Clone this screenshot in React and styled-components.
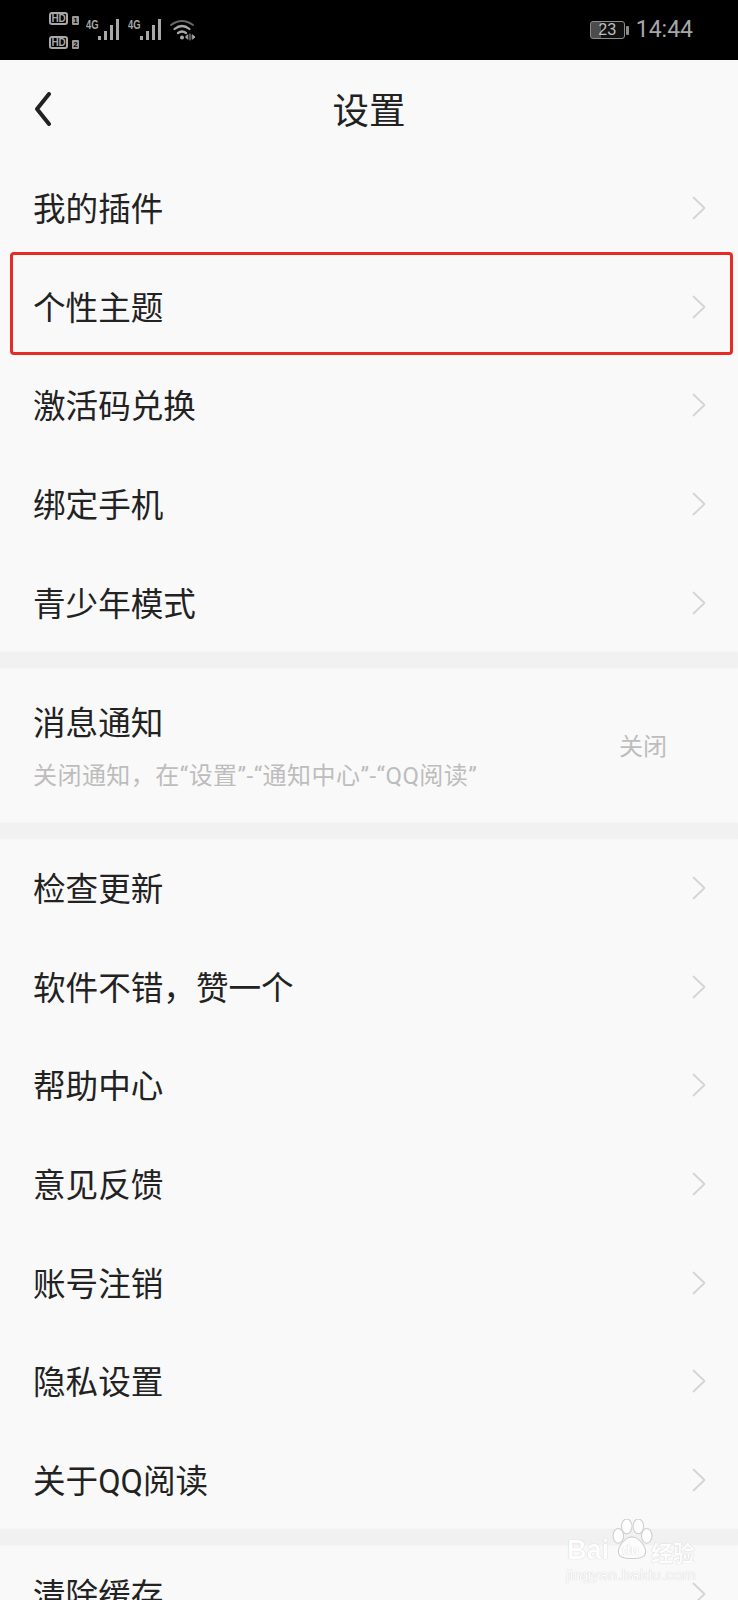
import React from "react";
import styled, { createGlobalStyle } from "styled-components";

const GlobalStyle = createGlobalStyle`
  html, body {
    margin: 0;
    padding: 0;
    background: #f9f9f9;
  }
  body {
    font-family: Roboto, "Noto Sans CJK SC", "Noto Sans", sans-serif;
  }
`;

const Page = styled.div`
  position: relative;
  width: 738px;
  height: 1600px;
  overflow: hidden;
  background: #f9f9f9;
`;

// Status bar
const StatusBar = styled.div`
  height: 60px;
  box-sizing: border-box;
  padding: 0 45px 0 49px;
  background: #000;
  color: #a8a8a8;
  display: flex;
  align-items: center;
  justify-content: space-between;
`;

const StatusGroup = styled.div`
  display: flex;
  align-items: center;
`;

const SimStack = styled.div`
  display: flex;
  flex-direction: column;
  gap: 11px;
  margin: 1px 7px 0 0;
`;

const SimRow = styled.div`
  display: flex;
  align-items: flex-end;
  gap: 4px;
`;

const HdBadge = styled.span`
  width: 19px;
  height: 13px;
  box-sizing: border-box;
  border: 2px solid #a8a8a8;
  border-radius: 3px;
  font: 700 10px/9px "Liberation Sans", sans-serif;
  letter-spacing: -0.3px;
  text-align: center;
`;

const SimNo = styled.span`
  width: 7px;
  height: 9px;
  background: #9a9a9a;
  color: #000;
  border-radius: 1px;
  font: 700 8px/9px "Liberation Sans", sans-serif;
  text-align: center;
`;

const Network = styled.div`
  display: flex;
  align-items: flex-end;
  height: 21px;
  margin-right: 8px;
  margin-top: -1px;
`;

const NetLabel = styled.span`
  align-self: flex-start;
  width: 12px;
  font: 700 13px/11px "Liberation Sans", sans-serif;
  transform: scaleX(0.72);
  transform-origin: left top;
`;

const Battery = styled.div`
  position: relative;
  width: 35px;
  height: 18px;
  box-sizing: border-box;
  border: 1px solid #8c8c8c;
  border-radius: 3px;
  margin-right: 11px;
  background: linear-gradient(to right, #4c4c4c 30%, #111 30%);
  color: #bdbdbd;
  font: 400 16px/16px "Liberation Sans", sans-serif;
  text-align: center;

  &::after {
    content: "";
    position: absolute;
    right: -5px;
    top: 4px;
    width: 3px;
    height: 9px;
    background: #8c8c8c;
    border-radius: 1px;
  }
`;

const Clock = styled.span`
  font: 400 23px/28px Roboto, sans-serif;
  color: #a8a8a8;
`;

// Header
const Header = styled.header`
  position: relative;
  height: 99px;
  display: flex;
  align-items: center;
  justify-content: center;
`;

const BackButton = styled.button`
  position: absolute;
  left: 34px;
  top: 32px;
  padding: 0;
  border: 0;
  background: none;
  line-height: 0;
`;

const Title = styled.h1`
  margin: 5px 0 0;
  font-size: 36.5px;
  font-weight: 400;
  line-height: 48px;
  color: #222;
`;

// List rows
const Section = styled.section`
  display: flex;
  flex-direction: column;
`;

const Row = styled.div`
  height: 98.6px;
  padding: 0 32px 0 33px;
  display: flex;
  align-items: center;
  justify-content: space-between;
`;

const RowLabel = styled.span`
  margin-top: ${({ $flush }) => ($flush ? 0 : 4)}px;
  font-size: 32.6px;
  line-height: 44px;
  color: #222;
`;

const Divider = styled.div`
  height: 16px;
  background: #f1f1f1;
  box-shadow: 0 0 3px #f1f1f1;
`;

const NoticeRow = styled.div`
  height: 155px;
  box-sizing: border-box;
  padding: 34px 71px 0 33px;
  display: flex;
  justify-content: space-between;
`;

const NoticeText = styled.div`
  display: flex;
  flex-direction: column;
  gap: 13px;
`;

const NoticeHint = styled.span`
  font-size: 24px;
  line-height: 34px;
  color: #bdbdbd;
  letter-spacing: 0.45px;
  white-space: nowrap;
`;

const NoticeValue = styled.span`
  margin-top: 28px;
  font-size: 24px;
  line-height: 34px;
  color: #bdbdbd;
`;

// Annotation and watermark, both sit over the screenshot
const Highlight = styled.div`
  position: absolute;
  left: 10px;
  top: 252px;
  width: 723px;
  height: 103px;
  box-sizing: border-box;
  border: 3px solid #e62a25;
  border-radius: 4px;
`;

const Watermark = styled.div`
  position: absolute;
  left: 566px;
  top: 1519px;
  width: 134px;
  height: 66px;
  color: #fdfdfd;
  text-shadow: 0 0 1px #bcbcbc;
`;

const Paw = styled.svg`
  position: absolute;
  left: 44px;
  top: 0;
`;

const WmBrand = styled.span`
  position: absolute;
  top: 18px;
  left: 1px;
  font: 700 27px/26px "Liberation Sans", sans-serif;
`;

const WmDu = styled.span`
  position: absolute;
  left: 56px;
  top: 23px;
  font: 700 14px/16px "Liberation Sans", sans-serif;
  color: #fff;
`;

const WmCn = styled.span`
  position: absolute;
  left: 85px;
  top: 20px;
  font-family: "Noto Sans CJK SC", sans-serif;
  font-size: 22px;
  line-height: 24px;
  font-weight: 700;
`;

const WmUrl = styled.span`
  position: absolute;
  left: 0;
  top: 47px;
  font: 400 15.5px/18px "Liberation Sans", sans-serif;
  letter-spacing: 0.3px;
`;

const Chevron = () => (
  <svg width="14" height="24" viewBox="0 0 14 24" fill="none">
    <path d="M1.5 1.5 L12.5 12 L1.5 22.5" stroke="#d4d4d4" strokeWidth="1.8" strokeLinecap="round" strokeLinejoin="round" />
  </svg>
);

const Bars = () => (
  <svg width="22" height="21" viewBox="0 0 22 21" fill="#a8a8a8">
    <rect x="0" y="17" width="3" height="4" />
    <rect x="6" y="12" width="3" height="9" />
    <rect x="12" y="6" width="3" height="15" />
    <rect x="18" y="0" width="3" height="21" />
  </svg>
);

const Wifi = () => (
  <svg width="26" height="22" viewBox="0 0 26 22" fill="none" stroke="#a8a8a8" strokeLinecap="round">
    <path d="M1 6 Q12 -2 23 6" stroke="#666" strokeWidth="2" />
    <path d="M4.5 10 Q12 4 19.5 10" strokeWidth="2.2" />
    <path d="M8 14 Q12 11 16 14" strokeWidth="2.2" />
    <circle cx="12" cy="18.5" r="2" fill="#a8a8a8" stroke="none" />
    <path d="M20 15 V21 M17.5 16 L15.5 18 L17.5 20 Z M22.5 16 L25 18 L22.5 20 Z" strokeWidth="1" fill="#a8a8a8" />
  </svg>
);

const topRows = ["我的插件", "个性主题", "激活码兑换", "绑定手机", "青少年模式"];
const midRows = ["检查更新", "软件不错，赞一个", "帮助中心", "意见反馈", "账号注销", "隐私设置", "关于QQ阅读"];

const ListRow = ({ label }) => (
  <Row>
    <RowLabel>{label}</RowLabel>
    <Chevron />
  </Row>
);

const App = () => (
  <>
    <GlobalStyle />
    <Page>
      <StatusBar>
        <StatusGroup>
          <SimStack>
            <SimRow><HdBadge>HD</HdBadge><SimNo>1</SimNo></SimRow>
            <SimRow><HdBadge>HD</HdBadge><SimNo>2</SimNo></SimRow>
          </SimStack>
          <Network><NetLabel>4G</NetLabel><Bars /></Network>
          <Network><NetLabel>4G</NetLabel><Bars /></Network>
          <Wifi />
        </StatusGroup>
        <StatusGroup>
          <Battery>23</Battery>
          <Clock>14:44</Clock>
        </StatusGroup>
      </StatusBar>

      <Header>
        <BackButton aria-label="返回">
          <svg width="18" height="34" viewBox="0 0 18 34" fill="none">
            <path d="M15 2 L3 17 L15 32" stroke="#222" strokeWidth="4" strokeLinecap="round" strokeLinejoin="round" />
          </svg>
        </BackButton>
        <Title>设置</Title>
      </Header>

      <Section>
        {topRows.map((label) => <ListRow key={label} label={label} />)}
      </Section>
      <Divider />
      <NoticeRow>
        <NoticeText>
          <RowLabel $flush>消息通知</RowLabel>
          <NoticeHint>关闭通知，在“设置”-“通知中心”-“QQ阅读”</NoticeHint>
        </NoticeText>
        <NoticeValue>关闭</NoticeValue>
      </NoticeRow>
      <Divider />
      <Section>
        {midRows.map((label) => <ListRow key={label} label={label} />)}
      </Section>
      <Divider />
      <Section>
        <ListRow label="清除缓存" />
      </Section>

      <Highlight />
      <Watermark>
        <Paw width="44" height="40" viewBox="0 0 40 38" fill="#fdfdfd" stroke="#cfcfcf" strokeWidth="1">
          <ellipse cx="7" cy="16" rx="5" ry="7" />
          <ellipse cx="15" cy="7" rx="5" ry="7" />
          <ellipse cx="26" cy="7" rx="5" ry="7" />
          <ellipse cx="34" cy="16" rx="5" ry="7" />
          <path d="M20 17 C28 17 38 32 30 36 C25 38 15 38 10 36 C2 32 12 17 20 17 Z" />
        </Paw>
        <WmBrand>Bai</WmBrand>
        <WmDu>du</WmDu>
        <WmCn>经验</WmCn>
        <WmUrl>jingyan.baidu.com</WmUrl>
      </Watermark>
    </Page>
  </>
);

export default App;
